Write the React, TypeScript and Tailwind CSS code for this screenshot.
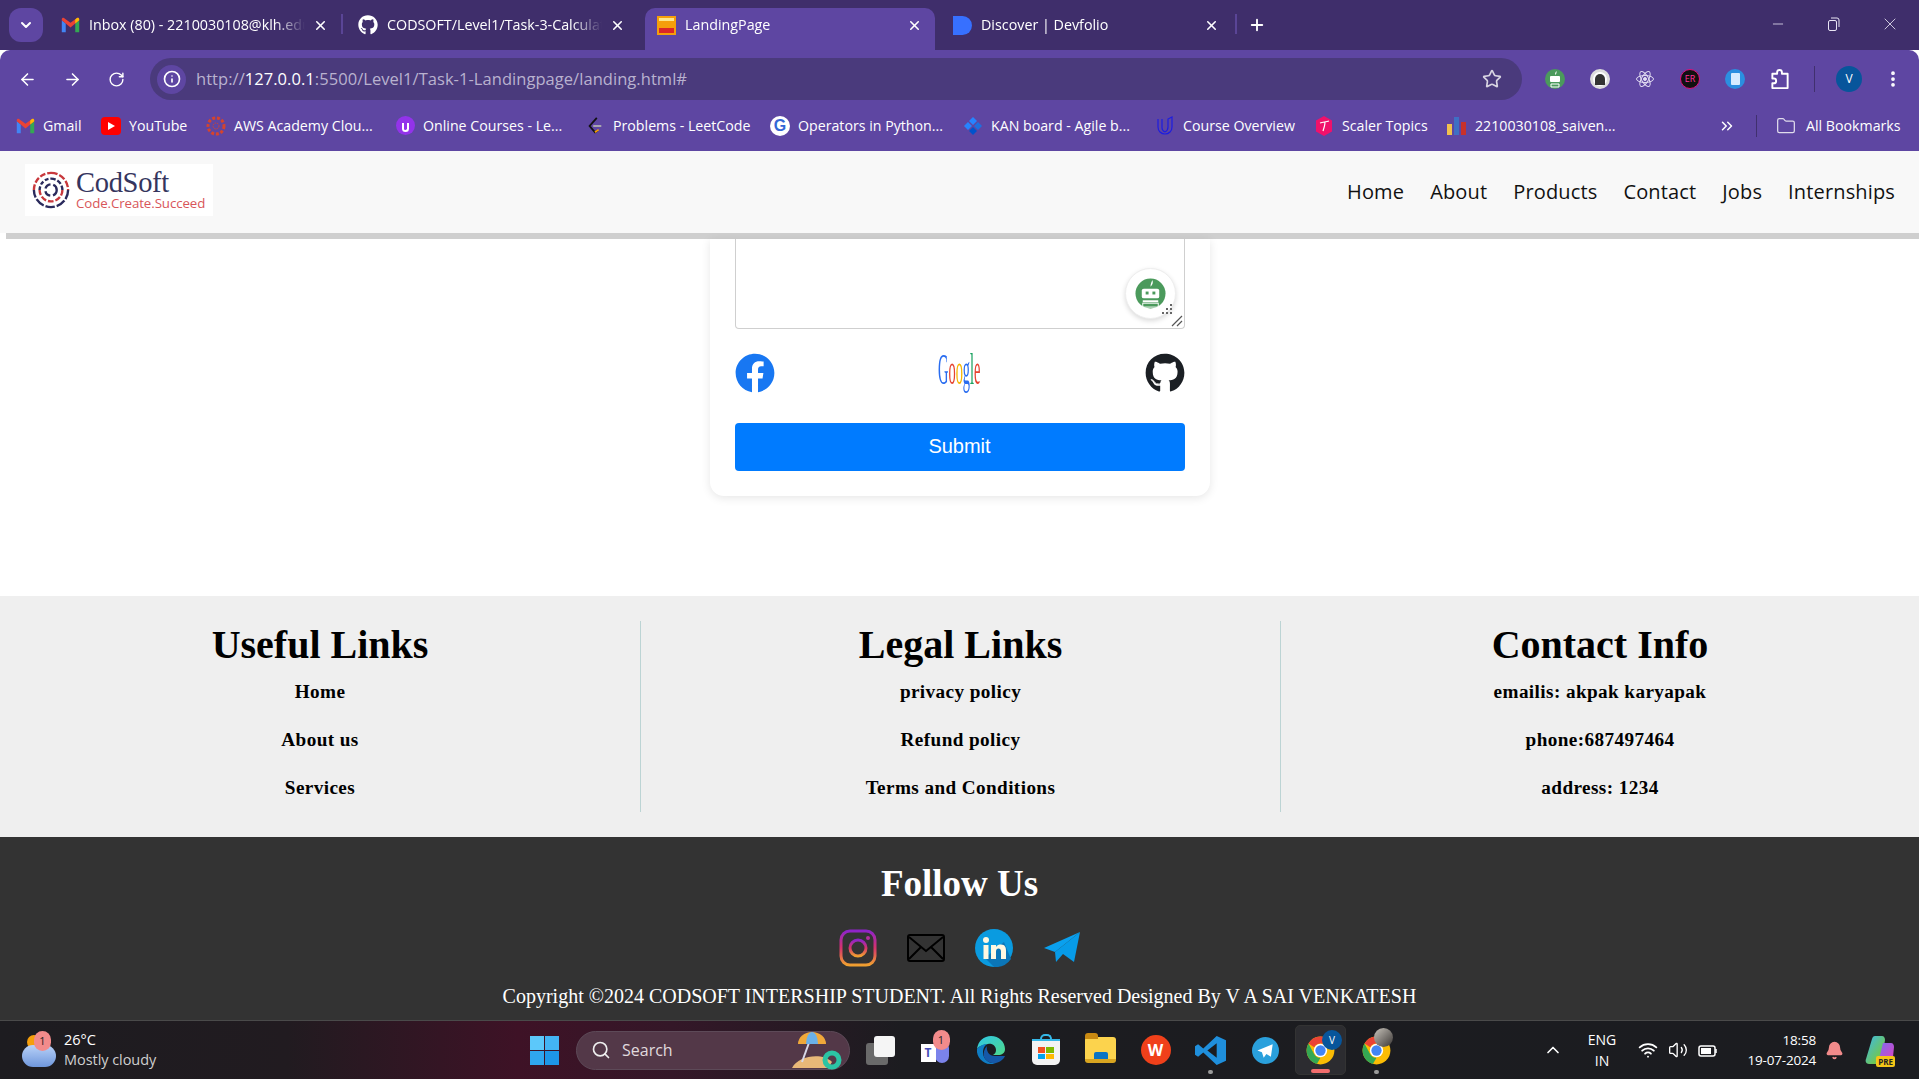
import React from "react";
import { ArrowLeft, ArrowRight, RotateCw, Star, X, Plus, ChevronDown, ChevronUp, Minus, Info, Search, MoreVertical, ChevronsRight, Folder, Wifi, Volume2, Bell } from "lucide-react";
import { FaFacebook, FaGithub } from "react-icons/fa";

const Gmail = () => (
  <svg viewBox="0 0 24 20" className="w-[19px] h-[16px]">
    <path d="M1 19V4l5 4v11z" fill="#4285f4" />
    <path d="M23 19V4l-5 4v11z" fill="#34a853" />
    <path d="M6 8 1 4V3c0-2 2-3 4-1l7 5 7-5c2-2 4-1 4 1v1l-5 4-6 5z" fill="#ea4335" />
    <path d="M18 8l5-4V3c0-2-2-3-4-1l-1 1z" fill="#fbbc04" />
  </svg>
);

const Chrome = ({ size = "w-[28px] h-[28px]" }: { size?: string }) => (
  <svg viewBox="0 0 48 48" className={size}>
    <circle cx="24" cy="24" r="23" fill="#fbbc04" />
    <path d="M24 1a23 23 0 0 1 20 11.500H24a12 12 0 0 0-10.400 6L4.100 12.500A23 23 0 0 1 24 1z" fill="#ea4335" />
    <path d="M4.100 12.500 13.600 30a12 12 0 0 0 10.400 6l-6 10.300A23 23 0 0 1 4.100 12.500z" fill="#34a853" />
    <circle cx="24" cy="24" r="11" fill="#fff" />
    <circle cx="24" cy="24" r="8.500" fill="#4285f4" />
  </svg>
);

const Favicon = ({ kind }: { kind: string }) => {
  if (kind === "gmail") return <Gmail />;
  if (kind === "youtube")
    return (
      <div className="w-[21px] h-[18px] rounded-[4px] bg-[#f00] flex items-center justify-center">
        <div className="w-0 h-0 border-y-[4px] border-y-transparent border-l-[7px] border-l-white" />
      </div>
    );
  if (kind === "aws")
    return (
      <svg viewBox="0 0 20 20" className="w-[20px] h-[20px]">
        <circle cx="10" cy="10" r="8" fill="none" stroke="#d4442e" strokeWidth="3" strokeDasharray="3 1.800" />
        <circle cx="10" cy="10" r="3" fill="none" stroke="#d4442e" strokeWidth="1" strokeDasharray="1.500 1" />
      </svg>
    );
  if (kind === "udemy")
    return (
      <div className="w-[19px] h-[19px] rounded-full bg-[#9333ea] flex items-center justify-center">
        <div className="w-[7px] h-[9px] mt-[3px] border-x-2 border-b-2 border-white rounded-b-[4px]" />
      </div>
    );
  if (kind === "leetcode")
    return (
      <svg viewBox="0 0 20 20" className="w-[18px] h-[20px]">
        <path d="M12 1 4 10l6 7 3-2" fill="none" stroke="#111" strokeWidth="2" />
        <path d="M10 17l4-3" stroke="#f59e0b" strokeWidth="2" />
        <path d="M8 10h9" stroke="#b0b0b0" strokeWidth="2" />
      </svg>
    );
  if (kind === "google")
    return (
      <div className="w-[20px] h-[20px] rounded-full bg-white flex items-center justify-center font-['Liberation_Sans',sans-serif] text-[#3367d6] text-[16px] font-bold leading-[20px]">G</div>
    );
  if (kind === "jira")
    return (
      <svg viewBox="0 0 20 20" className="w-[20px] h-[20px]">
        <path d="M10 1l4 4-4 4-4-4z" fill="#2684ff" />
        <path d="M5 6l4 4-4 4-4-4z" fill="#2684ff" />
        <path d="M15 6l4 4-4 4-4-4z" fill="#1d6fe0" />
        <path d="M10 11l4 4-4 4-4-4z" fill="#0052cc" />
      </svg>
    );
  if (kind === "udacity")
    return (
      <svg viewBox="0 0 20 20" className="w-[20px] h-[22px]">
        <path d="M3 3v8c0 4 3 7 7 7s7-3 7-7V1l-4 2v8c0 3-1 4-3 5M7 3v9c0 2 1 3 3 4" fill="none" stroke="#1d1de0" strokeWidth="1.200" />
      </svg>
    );
  if (kind === "scaler")
    return (
      <svg viewBox="0 0 20 20" className="w-[21px] h-[20px]">
        <path d="M10 0l8 4.500v11L10 20l-8-4.500v-11z" fill="#f0116b" />
        <path d="M6 7c3-1 6-1 9-2M11 6c0 3-1 6-2 9" fill="none" stroke="#fff" strokeWidth="1.200" />
      </svg>
    );
  return (
    <div className="w-[22px] h-[18px] flex items-end gap-[2px]">
      <div className="w-[5px] h-[11px] bg-[#f2c14e]" />
      <div className="w-[5px] h-[18px] bg-[#3f6fc4]" />
      <div className="w-[5px] h-[13px] bg-[#c8312b]" />
    </div>
  );
};

const tabs = [
  { title: "Inbox (80) - 2210030108@klh.edu", icon: <Gmail />, slot: "w-[298px] pl-[15px] pr-[15px]", active: false, line: true },
  { title: "CODSOFT/Level1/Task-3-Calculator", icon: <FaGithub className="text-white w-[20px] h-[20px]" />, slot: "w-[302px] pl-[15px] pr-[20px]", active: false, line: false },
  {
    title: "LandingPage",
    icon: (
      <div className="w-[19px] h-[19px] bg-[#f59e0b] flex flex-col justify-between p-[2px]">
        <div className="h-[3px] bg-[#fde68a]" />
        <div className="h-[5px] bg-[#dc2626]" />
      </div>
    ),
    slot: "w-[290px] pl-[11px] pr-[13px]",
    active: true,
    line: false,
  },
  { title: "Discover | Devfolio", icon: <div className="w-[19px] h-[19px] rounded-l-[5px] rounded-r-full bg-[#3770ff]" />, slot: "w-[302px] pl-[17px] pr-[18px]", active: false, line: true },
];

const bookmarks = [
  { label: "Gmail", kind: "gmail", w: "w-[86px]" },
  { label: "YouTube", kind: "youtube", w: "w-[105px]" },
  { label: "AWS Academy Clou...", kind: "aws", w: "w-[189px]" },
  { label: "Online Courses - Le...", kind: "udemy", w: "w-[190px]" },
  { label: "Problems - LeetCode", kind: "leetcode", w: "w-[185px]" },
  { label: "Operators in Python...", kind: "google", w: "w-[193px]" },
  { label: "KAN board - Agile b...", kind: "jira", w: "w-[192px]" },
  { label: "Course Overview", kind: "udacity", w: "w-[159px]" },
  { label: "Scaler Topics", kind: "scaler", w: "w-[133px]" },
  { label: "2210030108_saiven...", kind: "bars", w: "w-[190px]" },
];

const ExtIcon = ({ bg, children }: { bg: string; children: React.ReactNode }) => (
  <div className={`w-[20px] h-[20px] rounded-full flex items-center justify-center text-[9px] ${bg}`}>{children}</div>
);

const ChromeBar = () => (
  <div className="shrink-0 font-['Open_Sans',sans-serif] text-white">
    <div className="h-[50px] bg-[#3f2e6b] flex pl-[9px] pr-[19px]">
      <div className="w-[34px] h-[34px] mt-[8px] rounded-[12px] bg-[#5e46a2] flex items-center justify-center shrink-0">
        <ChevronDown size={16} strokeWidth={3} />
      </div>
      <div className="flex ml-[2px]">
        {tabs.map((t) => (
          <div
            key={t.title}
            className={`${t.slot} relative h-[42px] mt-[8px] pb-[8px] flex items-center shrink-0 rounded-t-[10px] ${t.active ? "bg-[#5e46a2]" : ""}`}
          >
            <div className="w-[20px] flex justify-center shrink-0">{t.icon}</div>
            <span className="flex-1 min-w-0 ml-[9px] overflow-hidden whitespace-nowrap text-[14.300px] [mask-image:linear-gradient(90deg,#000_86%,transparent)]">{t.title}</span>
            <X size={15} strokeWidth={2.500} className="ml-[8px] shrink-0" />
            {t.line && <div className="absolute right-0 top-[6px] w-[2px] h-[20px] bg-[#5a4596]" />}
          </div>
        ))}
      </div>
      <Plus size={18} strokeWidth={2.500} className="mt-[16px] ml-[11px]" />
      <div className="ml-auto flex items-center gap-[40px] text-[#e8e4f4] mb-[2px]">
        <Minus size={16} strokeWidth={1.200} />
        <svg viewBox="0 0 14 14" className="w-[14px] h-[14px]" fill="none" stroke="currentColor">
          <rect x="2.500" y="3.500" width="8" height="10" rx="1.500" />
          <path d="M5 1h6a2 2 0 0 1 2 2v7" />
        </svg>
        <X size={20} strokeWidth={1} />
      </div>
    </div>
    <div className="bg-[#5e46a2] rounded-tl-[10px] rounded-tr-[10px]">
      <div className="h-[58px] pt-[8px] flex items-start">
        <div className="flex items-center h-[42px] w-[150px] pl-[18px] gap-[26px]">
          <ArrowLeft size={19} strokeWidth={2} />
          <ArrowRight size={19} strokeWidth={2} />
          <RotateCw size={17} strokeWidth={2} />
        </div>
        <div className="w-[1372px] h-[42px] rounded-full bg-[#4a3a7c] flex items-center pl-[7px] pr-[18px]">
          <div className="w-[29px] h-[29px] rounded-full bg-[#5e46a2] flex items-center justify-center">
            <Info size={18} strokeWidth={2.200} />
          </div>
          <span className="ml-[10px] text-[16.500px] tracking-[0.05px] text-[#b9b2cf]">
            http://<span className="text-white">127.0.0.1</span>:5500/Level1/Task-1-Landingpage/landing.html#
          </span>
          <Star size={20} strokeWidth={2} className="ml-auto mr-[2px] text-[#d8d4e2]" />
        </div>
        <div className="flex items-center h-[42px] pl-[23px] gap-[25px]">
          <svg viewBox="0 0 20 20" className="w-[20px] h-[20px]">
            <circle cx="10" cy="10" r="10" fill="#4b9a5c" />
            <rect x="5" y="7" width="10" height="6" rx="1" fill="#fff" />
            <path d="M10 6c0-2 .5-3 1.500-4 .3 2-.3 3-1.500 4z" fill="#fff" />
            <path d="M6 15h8v3H6z" fill="none" stroke="#fff" />
          </svg>
          <ExtIcon bg="bg-white border-[3px] border-[#ddd]"><div className="w-[10px] h-[11px] rounded-t-full bg-[#333]" /></ExtIcon>
          <svg viewBox="0 0 20 20" className="w-[20px] h-[20px]" fill="none" stroke="#e2ddf2" strokeWidth="1">
            <ellipse cx="10" cy="10" rx="8.500" ry="3.500" />
            <ellipse cx="10" cy="10" rx="8.500" ry="3.500" transform="rotate(60 10 10)" />
            <ellipse cx="10" cy="10" rx="8.500" ry="3.500" transform="rotate(120 10 10)" />
            <circle cx="10" cy="10" r="1.500" fill="#e2ddf2" />
          </svg>
          <ExtIcon bg="bg-[#111] border border-[#e0107a] text-[#ff2f9a]">ER</ExtIcon>
          <ExtIcon bg="bg-[#2b8fe0]"><div className="w-[9px] h-[12px] bg-[#d7ecff] rounded-[1px]" /></ExtIcon>
          <svg viewBox="0 0 20 22" className="w-[20px] h-[21px]" fill="none" stroke="#fff" strokeWidth="2" strokeLinejoin="round">
            <path d="M2 5h5V3.500a2.500 2.500 0 0 1 5 0V5h6v15H2v-5h1.500a2.500 2.500 0 0 0 0-5H2z" />
          </svg>
          <div className="w-px h-[26px] bg-[#40306e] ml-[-1px]" />
          <div className="w-[26px] h-[26px] rounded-full bg-[#07559b] flex items-center justify-center text-[12px] ml-[-4px]">V</div>
          <MoreVertical size={20} strokeWidth={2.500} className="ml-[-4px]" />
        </div>
      </div>
      <div className="h-[43px] pb-[7px] flex items-center pl-[15px] text-[14.200px]">
        {bookmarks.map((b) => (
          <div key={b.label} className={`${b.w} flex items-center shrink-0 whitespace-nowrap`}>
            <div className="w-[20px] flex justify-center shrink-0">
              <Favicon kind={b.kind} />
            </div>
            <span className="ml-[8px]">{b.label}</span>
          </div>
        ))}
        <ChevronsRight size={18} className="ml-[81px]" />
        <div className="w-px h-[22px] bg-[#40306e] ml-[20px]" />
        <Folder size={20} strokeWidth={1.500} className="ml-[19px] text-[#e0dcec]" />
        <span className="ml-[10px] whitespace-nowrap">All Bookmarks</span>
      </div>
    </div>
  </div>
);

const CodSoftLogo = () => (
  <div className="w-[188px] h-[52px] bg-white flex items-center pl-[7px]">
    <svg viewBox="0 0 40 40" className="w-[38px] h-[38px] shrink-0" fill="none" strokeWidth="2.500">
      <path d="M20 2a18 18 0 0 1 18 18" stroke="#c8383c" strokeDasharray="7 2" />
      <path d="M38 20a18 18 0 0 1-18 18A18 18 0 0 1 2 20" stroke="#2a2a5c" strokeDasharray="10 2" />
      <path d="M2 20A18 18 0 0 1 20 2" stroke="#c8383c" strokeDasharray="6 2" />
      <path d="M20 8a12 12 0 0 1 12 12" stroke="#2a2a5c" strokeDasharray="5 2" />
      <path d="M32 20a12 12 0 0 1-24 0" stroke="#c8383c" strokeDasharray="6 2" />
      <path d="M8 20A12 12 0 0 1 20 8" stroke="#2a2a5c" strokeDasharray="4 2" />
      <circle cx="20" cy="20" r="6" stroke="#2a2a5c" strokeDasharray="7 3" />
    </svg>
    <div className="ml-[6px] mt-[-1px]">
      <div className="font-['Liberation_Serif',serif] text-[28.500px] leading-[28px] text-[#35355e] tracking-[-0.3px]">CodSoft</div>
      <div className="font-['Open_Sans',sans-serif] text-[13.300px] leading-[13px] text-[#d8565a] tracking-[-0.1px] whitespace-nowrap">Code.Create.Succeed</div>
    </div>
  </div>
);

const navLinks = ["Home", "About", "Products", "Contact", "Jobs", "Internships"];

const Navbar = () => (
  <div className="shrink-0">
    <div className="h-[82px] bg-[#f8f8f8] flex items-center pl-[25px] pr-[24px] justify-between">
      <div className="mt-[-4px]">
        <CodSoftLogo />
      </div>
      <div className="flex gap-[26px] mt-[-1px] font-['Open_Sans',sans-serif] text-[20px] tracking-[0.15px] text-[#111]">
        {navLinks.map((l) => (
          <span key={l}>{l}</span>
        ))}
      </div>
    </div>
    <div className="h-[6px] ml-[6px] bg-[#cfcfcf]" />
  </div>
);

const GoogleMark = () => (
  <div className="w-[40px] h-[40px] mt-[-5px] flex justify-center font-['Liberation_Serif',serif] text-[45px] leading-[42px]">
    <span className="inline-block shrink-0 scale-x-[0.32] whitespace-nowrap">
      <span className="text-[#2a6df0]">G</span>
      <span className="text-[#e5432f]">o</span>
      <span className="text-[#f7b500]">o</span>
      <span className="text-[#2a6df0]">g</span>
      <span className="text-[#1aa260]">l</span>
      <span className="text-[#e5432f]">e</span>
    </span>
  </div>
);

const FormCard = () => (
  <div className="w-[500px] mx-auto h-[257px] bg-white rounded-b-[14px] shadow-[0_2px_10px_rgba(0,0,0,0.1)] px-[25px]">
    <div className="relative h-[90px] border border-t-0 border-[#cfcfcf] rounded-b-[4px]">
      <div className="absolute right-[8px] bottom-[9px] w-[51px] h-[51px] rounded-full bg-white border border-[#eee] shadow-[0_2px_5px_rgba(0,0,0,0.15)] flex items-center justify-center">
        <svg viewBox="0 0 32 32" className="w-[31px] h-[31px]">
          <circle cx="16" cy="16" r="15.500" fill="#4b9a5c" />
          <rect x="7" y="11" width="18" height="10" rx="2" fill="#fff" />
          <rect x="11" y="14" width="3" height="3" fill="#4b9a5c" />
          <rect x="18" y="14" width="3" height="3" fill="#4b9a5c" />
          <path d="M16 9c0-3 1-5 2-7 1 3 0 5-2 7z" fill="#fff" />
          <rect x="8" y="23" width="16" height="2" fill="#fff" />
          <rect x="8" y="26" width="16" height="4" fill="none" stroke="#fff" />
        </svg>
        <svg viewBox="0 0 12 12" className="absolute right-[2px] bottom-[2px] w-[12px] h-[12px]" fill="#666">
          <rect x="9" y="0" width="2" height="2" />
          <rect x="5" y="4" width="2" height="2" />
          <rect x="9" y="4" width="2" height="2" />
          <rect x="1" y="8" width="2" height="2" />
          <rect x="5" y="8" width="2" height="2" />
          <rect x="9" y="8" width="2" height="2" />
        </svg>
      </div>
      <svg viewBox="0 0 12 12" className="absolute right-[1px] bottom-[1px] w-[12px] h-[12px]" stroke="#555" strokeWidth="1.200">
        <path d="M1 11 11 1M6 11l5-5" />
      </svg>
    </div>
    <div className="mt-[24px] flex justify-between items-start h-[40px]">
      <FaFacebook className="w-[40px] h-[40px] text-[#1877f2]" />
      <GoogleMark />
      <FaGithub className="w-[40px] h-[40px] text-[#1b1f24]" />
    </div>
    <button className="mt-[30px] w-full h-[48px] pb-[2px] rounded-[4px] bg-[#007bff] text-white text-[20px] font-['Liberation_Sans',sans-serif]">Submit</button>
  </div>
);

const footerCols = [
  { title: "Useful Links", items: ["Home", "About us", "Services"], line: true },
  { title: "Legal Links", items: ["privacy policy", "Refund policy", "Terms and Conditions"], line: true },
  { title: "Contact Info", items: ["emailis: akpak karyapak", "phone:687497464", "address: 1234"], line: false },
];

const LinksFooter = () => (
  <div className="h-[241px] shrink-0 bg-[#efefef] py-[25px] grid grid-cols-[641px_640px_638px] font-['Liberation_Serif',serif] text-black">
    {footerCols.map((c) => (
      <div key={c.title} className={`h-[191px] text-center ${c.line ? "border-r border-[#bcd4d4]" : ""}`}>
        <h2 className="pt-[1px] text-[40px] leading-[46px] font-bold">{c.title}</h2>
        <ul className="mt-[13px] text-[19.200px] font-bold tracking-[0.4px]">
          {c.items.map((it) => (
            <li key={it} className="h-[48px] leading-[22px]">{it}</li>
          ))}
        </ul>
      </div>
    ))}
  </div>
);

const FollowUs = () => (
  <div className="h-[184px] shrink-0 bg-[#333333] text-white text-center font-['Liberation_Serif',serif] border-b border-[#4a4a4a]">
    <h2 className="pt-[25px] text-[37px] leading-[44px] font-bold">Follow Us</h2>
    <div className="mt-[23px] flex justify-center items-center gap-[30px] h-[38px]">
      <svg viewBox="0 0 38 38" className="w-[38px] h-[38px]" fill="none">
        <defs>
          <linearGradient id="ig" x1="0" y1="0" x2="0" y2="1">
            <stop offset="0" stopColor="#8e24c9" />
            <stop offset="0.5" stopColor="#d6336c" />
            <stop offset="1" stopColor="#f0a030" />
          </linearGradient>
        </defs>
        <rect x="2" y="2" width="34" height="34" rx="9" stroke="url(#ig)" strokeWidth="3" />
        <circle cx="19" cy="19" r="8" stroke="url(#ig)" strokeWidth="3" />
        <circle cx="29" cy="9" r="2" fill="#b52fa0" />
      </svg>
      <svg viewBox="0 0 38 28" className="w-[38px] h-[28px]" fill="none" stroke="#000" strokeWidth="2">
        <rect x="1" y="1" width="36" height="26" rx="2" />
        <path d="M2 3 19 17 36 3M2 25l12-12M36 25 24 13" />
      </svg>
      <svg viewBox="0 0 38 38" className="w-[38px] h-[38px]">
        <circle cx="19" cy="19" r="19" fill="#0a9be0" />
        <path d="M29 13 36 30A19 19 0 0 1 19 38L10 29z" fill="#0b76b8" />
        <circle cx="11" cy="11" r="3" fill="#fff8e1" />
        <rect x="8.500" y="16" width="5" height="14" fill="#fff8e1" />
        <path d="M16 16h5v2c1-2 3-2.500 5-2.500 4 0 5 3 5 6V30h-5v-7.500c0-2-1-3-2.500-3S21 20.500 21 22.500V30h-5z" fill="#fff8e1" />
      </svg>
      <svg viewBox="0 0 38 32" className="w-[38px] h-[32px]">
        <path d="M37 0 31 30 20 22l-7 8-1-10z" fill="#079be8" />
        <path d="M37 0 1 16l11 4z" fill="#0aa0ee" />
      </svg>
    </div>
    <p className="mt-[17px] text-[20px] leading-[24px] whitespace-nowrap">Copyright ©2024 CODSOFT INTERSHIP STUDENT. All Rights Reserved Designed By V A SAI VENKATESH</p>
  </div>
);

const Slot = ({ children, dot }: { children: React.ReactNode; dot?: boolean }) => (
  <div className="relative w-[55px] h-[50px] flex items-center justify-center shrink-0">
    {children}
    {dot && <div className="absolute bottom-[1px] w-[5px] h-[4px] rounded-full bg-[#9a9a9a]" />}
  </div>
);

const Badge = ({ children }: { children: React.ReactNode }) => (
  <div className="absolute w-[17px] h-[20px] rounded-full bg-[#f28b8b] text-[#222] text-[11px] leading-[20px] text-center">{children}</div>
);

const Taskbar = () => (
  <div className="h-[58px] shrink-0 flex items-center bg-[linear-gradient(90deg,#1d1c20_0%,#211b20_15%,#3e1226_27%,#341728_35%,#1c1c20_47%,#1b1c20_100%)] text-white font-['Open_Sans',sans-serif] relative">
    <div className="w-[530px] pl-[22px] flex items-center shrink-0">
      <div className="relative w-[36px] h-[38px]">
        <div className="absolute left-[5px] top-[4px] w-[14px] h-[14px] rounded-full bg-[#f59e0b]" />
        <div className="absolute left-0 bottom-[2px] w-[34px] h-[22px] rounded-[11px] bg-[linear-gradient(#b9d2f8,#6f97dc)]" />
        <div className="absolute left-[12px] top-0">
          <Badge>1</Badge>
        </div>
      </div>
      <div className="ml-[6px] mt-[-1px] text-[14.500px] leading-[20px] tracking-[-0.05px]">
        <div>26°C</div>
        <div className="text-[#cfcfcf]">Mostly cloudy</div>
      </div>
    </div>
    <svg viewBox="0 0 29 29" className="w-[29px] h-[29px] shrink-0">
      <rect width="14" height="14" fill="#5cc8fa" />
      <rect x="15" width="14" height="14" fill="#43b4f4" />
      <rect y="15" width="14" height="14" fill="#2fa6ef" />
      <rect x="15" y="15" width="14" height="14" fill="#1d96e8" />
    </svg>
    <div className="ml-[17px] w-[274px] h-[39px] rounded-full bg-[#533848] border border-[#5d4a58] flex items-center pl-[14px] shrink-0 relative">
      <Search size={20} strokeWidth={2} className="text-[#eee]" />
      <span className="ml-[11px] text-[16px] text-[#e0dade]">Search</span>
      <svg viewBox="0 0 58 40" className="absolute right-[3px] top-[-2px] w-[58px] h-[40px]">
        <path d="M4 38c6-12 30-16 40-6l-4 6z" fill="#e8b878" />
        <path d="M22 10 14 32" stroke="#d8d8e8" strokeWidth="2" />
        <path d="M10 14a14 12 0 0 1 28 0z" fill="#f0a83a" />
        <path d="M18 14a6 12 0 0 1 12 0z" fill="#6ab0e8" />
        <circle cx="44" cy="30" r="7" fill="none" stroke="#2bc4a4" strokeWidth="5" />
      </svg>
    </div>
    <div className="ml-[3px] flex items-center shrink-0">
      <Slot>
        <div className="relative w-[29px] h-[29px]">
          <div className="absolute left-0 bottom-0 w-[22px] h-[22px] rounded-[3px] bg-[#6a6a6a]" />
          <div className="absolute right-0 top-0 w-[21px] h-[21px] rounded-[3px] bg-[#f5f5f5]" />
        </div>
      </Slot>
      <Slot>
        <div className="relative w-[30px] h-[30px]">
          <div className="absolute right-[2px] top-[6px] w-[14px] h-[22px] rounded-full bg-[#7b83eb]" />
          <div className="absolute left-0 top-[9px] w-[15px] h-[18px] bg-white text-[#464eb8] text-[12px] font-bold leading-[18px] text-center">T</div>
          <div className="absolute right-[0px] top-[-5px]">
            <div className="relative w-[18px] h-[20px]"><Badge>1</Badge></div>
          </div>
        </div>
      </Slot>
      <Slot>
        <svg viewBox="0 0 30 30" className="w-[30px] h-[30px]">
          <defs>
            <linearGradient id="edgeTop" x1="0" y1="0" x2="1" y2="1">
              <stop offset="0" stopColor="#2fc7e8" />
              <stop offset="1" stopColor="#4fd98a" />
            </linearGradient>
          </defs>
          <path d="M1 14C2 6 8 1 15 1c8 0 14 6 14 13 0 4-3 6-7 6h-5c2-1 3-3 3-5 0-4-4-7-8-6C7 10 3 11 1 14z" fill="url(#edgeTop)" />
          <path d="M1 14c2-3 6-5 10-5-4 3-5 8-3 13 2 4 7 7 12 6-2 1-4 1-6 1C7 29 0 22 1 14z" fill="#0f7cc4" />
          <path d="M20 28c-5 1-10-2-12-6-1-4 0-8 3-11-1 5 2 10 8 10h10c-1 3-5 6-9 7z" fill="#1558a8" />
        </svg>
      </Slot>
      <Slot>
        <div className="relative w-[28px] h-[26px] mt-[4px] rounded-b-[5px] bg-[#f3f3f3] border-t-2 border-[#35b8e8] grid grid-cols-2 gap-[1px] p-[6px]">
          <div className="absolute left-[8px] top-[-7px] w-[12px] h-[7px] rounded-t-[5px] border-2 border-b-0 border-[#35b8e8]" />
          <div className="bg-[#f25022]" />
          <div className="bg-[#7fba00]" />
          <div className="bg-[#00a4ef]" />
          <div className="bg-[#ffb900]" />
        </div>
      </Slot>
      <Slot>
        <div className="relative w-[31px] h-[26px] rounded-[3px] bg-[#fcd34d] border-b-4 border-[#d9a520]">
          <div className="absolute left-0 top-[-4px] w-[13px] h-[6px] rounded-t-[3px] bg-[#c98a12]" />
          <div className="absolute left-[9px] bottom-0 w-[14px] h-[7px] rounded-t-[2px] bg-[#0a74c4]" />
        </div>
      </Slot>
      <Slot>
        <div className="w-[30px] h-[30px] rounded-full bg-[#f0401a] flex items-center justify-center text-white font-bold text-[16px]">W</div>
      </Slot>
      <Slot dot>
        <svg viewBox="0 0 30 30" className="w-[31px] h-[31px]">
          <path d="M21 1 30 5v20l-9 4L8 17l-5 4-3-2v-8l3-2 5 4z" fill="#1f8fdc" />
          <path d="M21 8 12 15l9 7z" fill="#1b1c20" />
        </svg>
      </Slot>
      <Slot>
        <svg viewBox="0 0 30 30" className="w-[27px] h-[27px]">
          <circle cx="15" cy="15" r="15" fill="#2aa0dc" />
          <path d="M23 8 6 15l5 2 2 6 3-4 5 3z" fill="#fff" />
        </svg>
      </Slot>
      <div className="relative ml-[2px] w-[51px] h-[50px] rounded-[5px] bg-[#2c2c30] border border-[#333] flex items-center justify-center">
        <Chrome size="w-[29px] h-[29px]" />
        <div className="absolute right-[3px] top-[4px] w-[20px] h-[20px] rounded-full bg-[#07559b] text-[10px] text-center leading-[20px]">V</div>
        <div className="absolute bottom-[1px] w-[19px] h-[4px] rounded-full bg-[#f26d6d]" />
      </div>
      <div className="relative w-[55px] h-[50px] ml-[3px] flex items-center justify-center">
        <Chrome size="w-[29px] h-[29px]" />
        <div className="absolute right-[11px] top-[3px] w-[19px] h-[19px] rounded-full bg-[linear-gradient(135deg,#c9c4bc,#3a3634)]" />
        <div className="absolute bottom-[1px] w-[5px] h-[4px] rounded-full bg-[#9a9a9a]" />
      </div>
    </div>
    <div className="ml-auto flex items-center pr-[24px] shrink-0">
      <ChevronUp size={20} strokeWidth={2} className="mr-[1px]" />
      <div className="ml-[23px] text-center text-[14px] leading-[21px] w-[30px]">
        <div>ENG</div>
        <div>IN</div>
      </div>
      <Wifi size={20} strokeWidth={2.200} className="ml-[21px]" />
      <Volume2 size={20} strokeWidth={1.600} className="ml-[10px]" />
      <svg viewBox="0 0 20 16" className="ml-[10px] w-[20px] h-[16px]" fill="none" stroke="#fff" strokeWidth="1.500">
        <rect x="1" y="4" width="16" height="10" rx="2" />
        <rect x="3" y="6" width="10" height="6" fill="#fff" stroke="none" />
        <path d="M18 7v4" />
      </svg>
      <div className="ml-[20px] w-[78px] text-right text-[13.500px] leading-[20px] tracking-[-0.2px]">
        <div>18:58</div>
        <div>19-07-2024</div>
      </div>
      <Bell size={19} fill="#f28b8b" stroke="#f28b8b" className="ml-[9px]" />
      <div className="relative ml-[21px] w-[30px] h-[30px]">
        <svg viewBox="0 0 30 30" className="w-[30px] h-[30px]">
          <defs>
            <linearGradient id="copA" x1="0" y1="0" x2="1" y2="1">
              <stop offset="0" stopColor="#3ab8f0" />
              <stop offset="1" stopColor="#84cc16" />
            </linearGradient>
            <linearGradient id="copB" x1="0" y1="0" x2="1" y2="1">
              <stop offset="0" stopColor="#7c6cf0" />
              <stop offset="1" stopColor="#e040c0" />
            </linearGradient>
          </defs>
          <path d="M10 1h7c2 0 3 2 3 4l-3 20c0 2-2 4-4 4H4c-3 0-4-3-3-5l6-20c.500-2 1.500-3 3-3z" fill="url(#copA)" />
          <path d="M18 8h8c2 0 3 2 3 4l-1 10c0 3-2 5-5 5h-9c-1 0 0-2 0-3z" fill="url(#copB)" />
        </svg>
        <div className="absolute right-0 bottom-[-2px] px-[2px] rounded-[2px] bg-[#f5c518] text-[#222] text-[8px] leading-[11px] font-bold">PRE</div>
      </div>
    </div>
  </div>
);

export default function App() {
  return (
    <div className="h-screen overflow-hidden flex flex-col bg-white">
      <ChromeBar />
      <Navbar />
      <main className="flex-1 min-h-0 bg-white">
        <FormCard />
      </main>
      <LinksFooter />
      <FollowUs />
      <Taskbar />
    </div>
  );
}
